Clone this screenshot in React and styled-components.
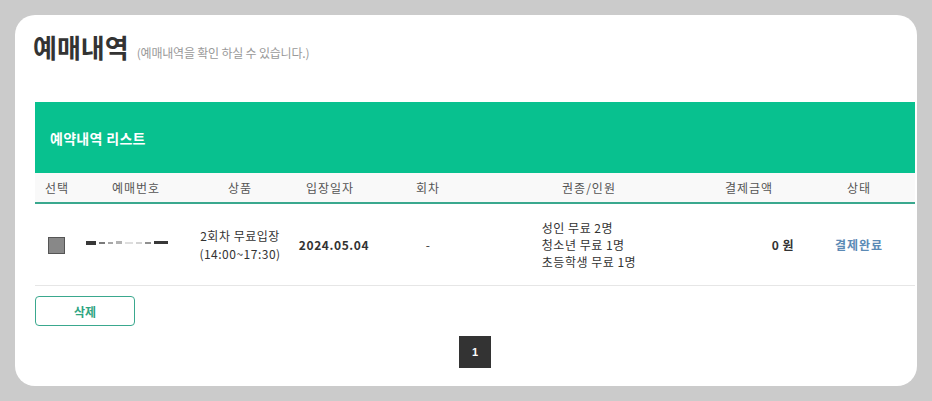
import React from 'react';
import styled, { createGlobalStyle } from 'styled-components';

const GlobalStyle = createGlobalStyle`
  body {
    margin: 0;
    background: #cbcbcb;
    font-family: "Noto Sans CJK KR", "Noto Sans", sans-serif;
  }
`;

const COLS = '44px 114px 94px 86px 110px 212px 108px 112px';

const Page = styled.div`
  padding: 15px;
  height: 401px;
  box-sizing: border-box;
`;

const Card = styled.div`
  background: #fff;
  border-radius: 20px;
  padding: 18px 2px 18px 20px;
  height: 371px;
  box-sizing: border-box;
`;

const TitleRow = styled.div`
  display: flex;
  align-items: baseline;
  gap: 8px;
  height: 28px;
  margin-bottom: 41px;
`;

const Title = styled.h2`
  margin: 0;
  font-size: 26px;
  line-height: 28px;
  font-weight: 700;
  color: #333;
  margin-left: -2px;
`;

const SubTitle = styled.span`
  font-size: 12px;
  color: #999;
  letter-spacing: -0.2px;
`;

const ListBar = styled.div`
  background: #08c18f;
  height: 71px;
  display: flex;
  align-items: center;
  padding-left: 15px;
  color: #fff;
  font-size: 14px;
  font-weight: 700;
  letter-spacing: 0.3px;
`;

const Row = styled.div`
  display: grid;
  grid-template-columns: ${COLS};
  align-items: center;
`;

const HeadRow = styled(Row)`
  height: 29px;
  background: #f9f9f9;
  border-bottom: 2px solid #3aa88e;
`;

const HeadCell = styled.div`
  text-align: center;
  font-size: 12px;
  color: #555;
  letter-spacing: 1px;
`;

const BodyRow = styled(Row)`
  height: 81px;
  border-bottom: 1px solid #e6e6e6;
`;

const Cell = styled.div`
  text-align: ${p => p.$align || 'center'};
  padding-right: ${p => p.$pr || 0}px;
  font-size: 12px;
  line-height: 18px;
  color: ${p => p.$color || '#333'};
  font-weight: ${p => (p.$bold ? 700 : 400)};
  letter-spacing: ${p => p.$ls ?? 0.5}px;
`;

const Check = styled.span`
  display: inline-block;
  width: 15px;
  height: 15px;
  background: #888;
  border: 1px solid #555;
  margin-left: -2px;
  vertical-align: middle;
`;

const Masked = styled.div`
  display: flex;
  align-items: center;
  gap: 3px;
  margin-left: 7px;
  margin-top: -4px;
`;

const Dash = styled.span`
  height: ${p => p.$h}px;
  width: ${p => p.$w}px;
  background: #222;
  opacity: ${p => p.$o};
`;

const Tickets = styled.div`
  display: inline-block;
  text-align: left;
  line-height: 17px;
`;

const Footer = styled.div`
  padding-top: 10px;
`;

const DeleteButton = styled.button`
  width: 100px;
  height: 30px;
  border: 1px solid #3aa88e;
  border-radius: 4px;
  background: #fff;
  color: #2fa582;
  font-family: inherit;
  font-size: 12px;
  font-weight: 700;
`;

const Pager = styled.div`
  display: flex;
  justify-content: center;
  margin-top: 10px;
`;

const PageNum = styled.span`
  width: 32px;
  height: 32px;
  background: #333;
  color: #fff;
  font-size: 11px;
  font-weight: 700;
  display: flex;
  align-items: center;
  justify-content: center;
  font-family: "Liberation Sans", sans-serif;
`;

const headers = ['선택', '예매번호', '상품', '입장일자', '회차', '권종/인원', '결제금액', '상태'];

const dashes = [
  { w: 10, h: 4, o: 0.9 },
  { w: 6, h: 2, o: 0.6 },
  { w: 5, h: 2, o: 0.4 },
  { w: 6, h: 3, o: 0.35 },
  { w: 8, h: 2, o: 0.15 },
  { w: 6, h: 2, o: 0.2 },
  { w: 6, h: 2, o: 0.5 },
  { w: 14, h: 3, o: 0.9 },
];

export default function App() {
  return (
    <Page>
      <GlobalStyle />
      <Card>
        <TitleRow>
          <Title>예매내역</Title>
          <SubTitle>(예매내역을 확인 하실 수 있습니다.)</SubTitle>
        </TitleRow>
        <ListBar>예약내역 리스트</ListBar>
        <HeadRow>
          {headers.map(h => (
            <HeadCell key={h}>{h}</HeadCell>
          ))}
        </HeadRow>
        <BodyRow>
          <Cell><Check /></Cell>
          <Cell>
            <Masked>
              {dashes.map((d, i) => (
                <Dash key={i} $w={d.w} $h={d.h} $o={d.o} />
              ))}
            </Masked>
          </Cell>
          <Cell>
            2회차 무료입장<br />(14:00~17:30)
          </Cell>
          <Cell $bold $ls={0.6} style={{ paddingLeft: 8 }}>2024.05.04</Cell>
          <Cell>-</Cell>
          <Cell>
            <Tickets>
              성인 무료 2명<br />
              청소년 무료 1명<br />
              초등학생 무료 1명
            </Tickets>
          </Cell>
          <Cell $align="right" $pr={9} $bold>0 원</Cell>
          <Cell $bold $color="#5b8ab5" $ls={1}>결제완료</Cell>
        </BodyRow>
        <Footer>
          <DeleteButton>삭제</DeleteButton>
          <Pager>
            <PageNum>1</PageNum>
          </Pager>
        </Footer>
      </Card>
    </Page>
  );
}
